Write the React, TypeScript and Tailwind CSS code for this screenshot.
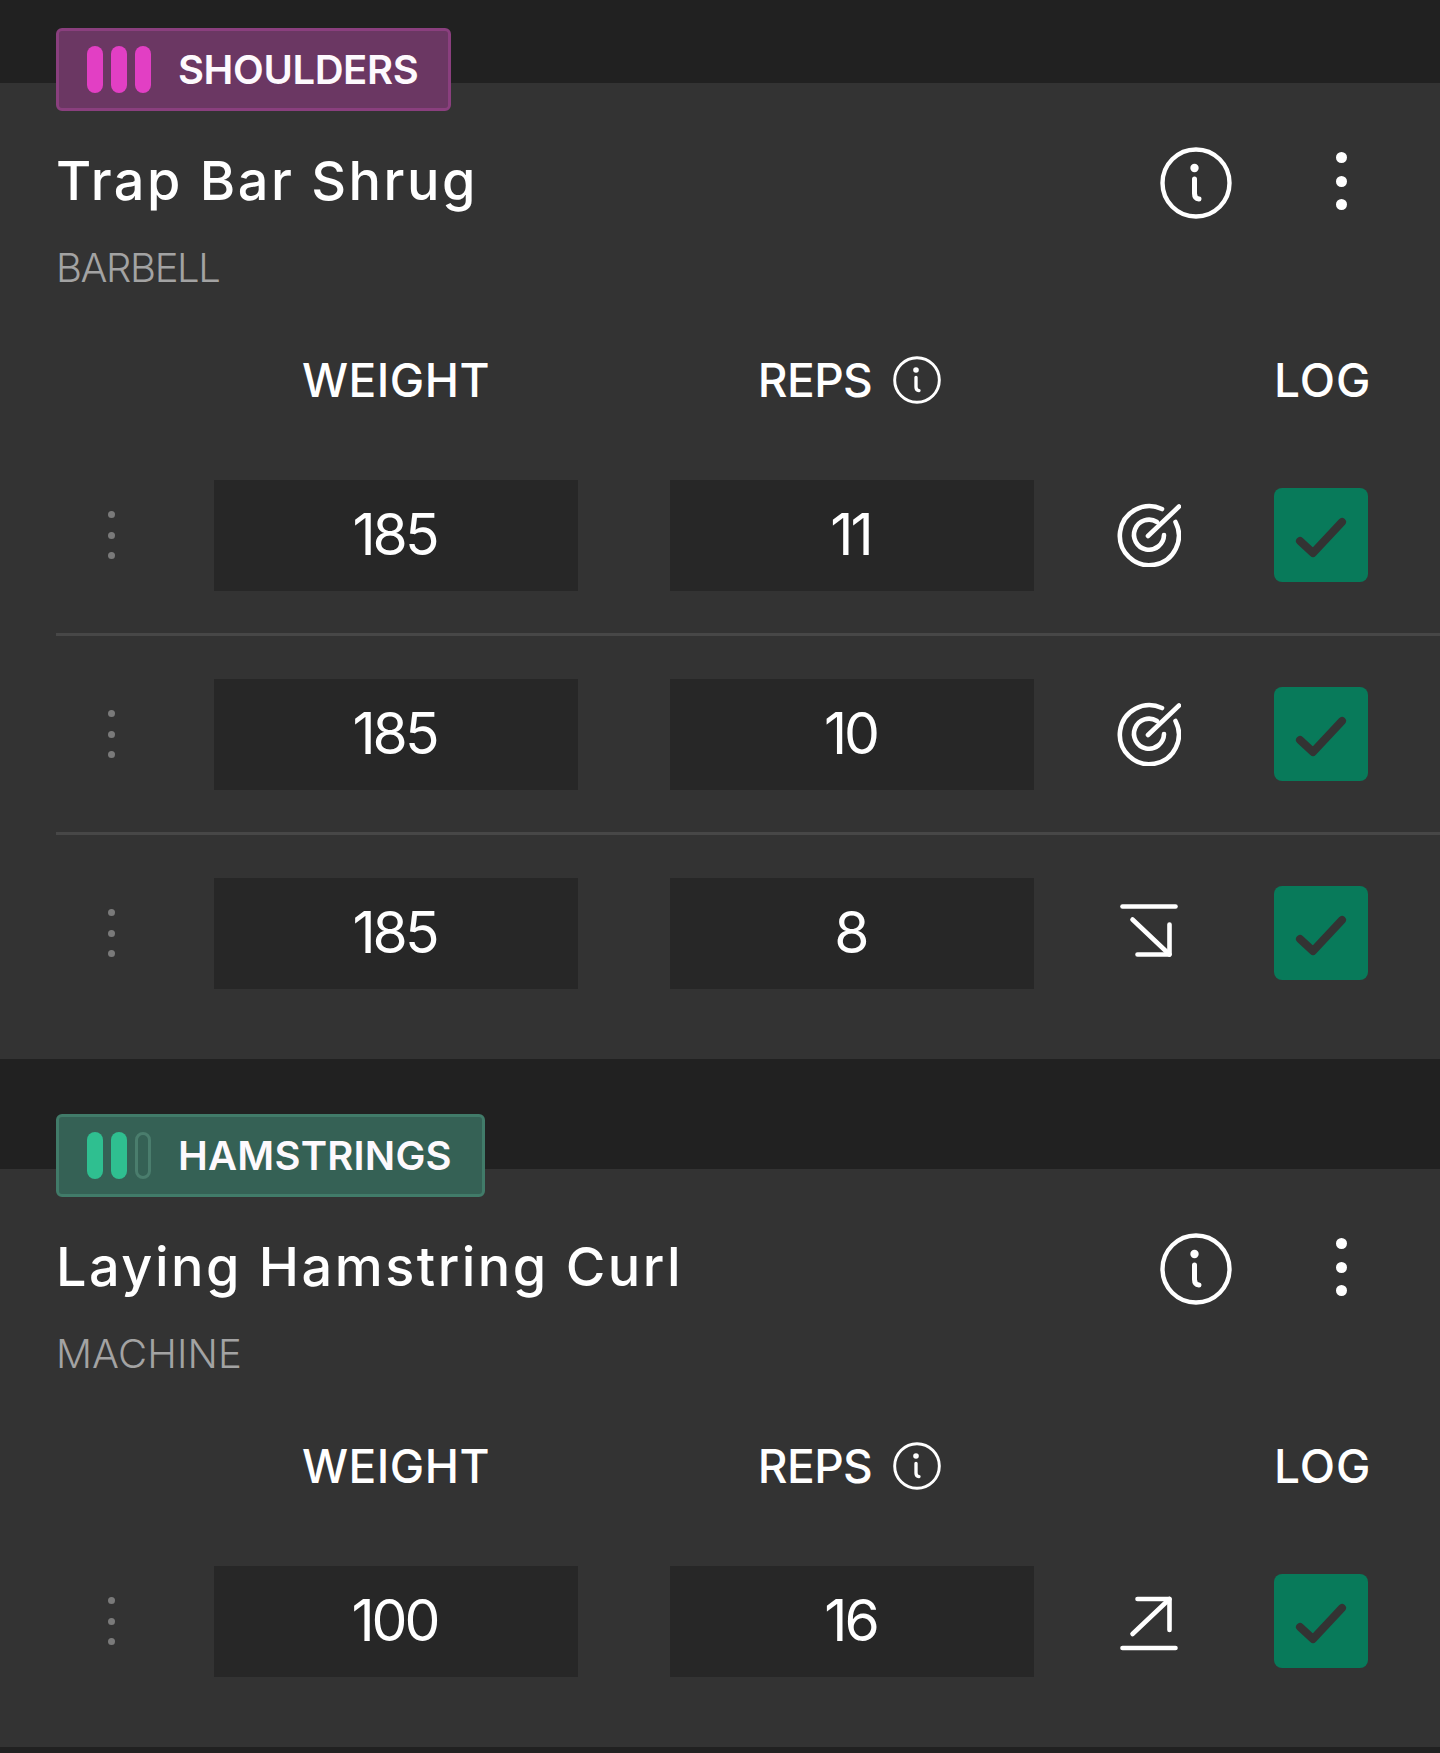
type Trend = 'target' | 'down' | 'up';

interface SetRow {
  weight: number;
  reps: number;
  trend: Trend;
}

interface Exercise {
  muscle: string;
  tone: 'pink' | 'green';
  fill: number;
  name: string;
  kit: string;
  sets: SetRow[];
}

const exercises: Exercise[] = [
  {
    muscle: 'SHOULDERS',
    tone: 'pink',
    fill: 3,
    name: 'Trap Bar Shrug',
    kit: 'BARBELL',
    sets: [
      { weight: 185, reps: 11, trend: 'target' },
      { weight: 185, reps: 10, trend: 'target' },
      { weight: 185, reps: 8, trend: 'down' },
    ],
  },
  {
    muscle: 'HAMSTRINGS',
    tone: 'green',
    fill: 2,
    name: 'Laying Hamstring Curl',
    kit: 'MACHINE',
    sets: [{ weight: 100, reps: 16, trend: 'up' }],
  },
];

const grid = 'grid grid-cols-[158px_364px_92px_364px_240px_94px] items-center';

function InfoIcon({ className }: { className: string }) {
  return (
    <svg viewBox="0 0 72 72" fill="none" stroke="currentColor" strokeWidth="4.4" strokeLinecap="round" className={className}>
      <circle cx="36" cy="36" r="33.5" />
      <circle cx="34.5" cy="21" r="4.2" fill="currentColor" stroke="none" />
      <path d="M34.5 32v14.5q0 5 4.5 5.5" strokeWidth="5" />
    </svg>
  );
}

function TrendIcon({ trend }: { trend: Trend }) {
  return (
    <svg viewBox="0 0 64 64" fill="none" stroke="currentColor" strokeWidth="4.6" strokeLinecap="round" strokeLinejoin="round" className="h-16 w-16 text-white">
      {trend === 'target' && (
        <>
          <path d="M45 6A29.5 29.5 0 1 0 58.5 19" />
          <path d="M40 19A15 15 0 1 0 47 32" />
          <path d="M31 33L62 3.5" />
        </>
      )}
      {trend === 'down' && (
        <>
          <path d="M5.5 5.5H58.5" />
          <path d="M15.5 18.5L52.5 53.5" />
          <path d="M52.5 23.5V53.5H20.5" />
        </>
      )}
      {trend === 'up' && (
        <>
          <path d="M5.5 59H58.5" />
          <path d="M15.5 45L52.5 10" />
          <path d="M20.5 10H52.5V41" />
        </>
      )}
    </svg>
  );
}

function Badge({ exercise }: { exercise: Exercise }) {
  const pink = exercise.tone === 'pink';
  return (
    <div
      className={`-mt-[55px] flex h-[83px] w-fit items-center rounded-[6px] border-[3px] pl-[28px] pr-[30px] ${
        pink ? 'border-[#8a3f7e] bg-[#6b3763]' : 'border-[#417b69] bg-[#356155]'
      }`}
    >
      <div className="flex gap-[8px]">
        {[0, 1, 2].map((i) => (
          <span
            key={i}
            className={`h-[47px] w-[16px] rounded-full ${
              i < exercise.fill
                ? pink
                  ? 'bg-[#e23fc4]'
                  : 'bg-[#2fbf90]'
                : 'border-[3px] border-[#4a7d6d]'
            }`}
          />
        ))}
      </div>
      <span
        className={`ml-[27px] text-[40px] leading-none font-semibold text-[#fdf9fd] ${
          pink ? 'tracking-[-0.4px]' : 'tracking-[0.2px]'
        }`}
      >
        {exercise.muscle}
      </span>
    </div>
  );
}

function ExerciseCard({ exercise }: { exercise: Exercise }) {
  return (
    <section className="flow-root bg-[#333333] pb-[28px] pl-[56px] [&+section]:mt-[110px]">
      <Badge exercise={exercise} />

      <div className="mt-[32px] flex h-[76px] items-center justify-between pr-[93px]">
        <h2 className="text-[54px] leading-[76px] font-medium tracking-[2.5px] text-white">{exercise.name}</h2>
        <div className="flex items-center gap-[104px]">
          <InfoIcon className="mt-[4px] h-[72px] w-[72px] text-white" />
          <div className="flex flex-col gap-[12.5px]">
            <span className="h-[11px] w-[11px] rounded-full bg-white" />
            <span className="h-[11px] w-[11px] rounded-full bg-white" />
            <span className="h-[11px] w-[11px] rounded-full bg-white" />
          </div>
        </div>
      </div>

      <p
        className={`mt-[25px] text-[40px] leading-[48px] font-light text-[#a3a3a3] ${
          exercise.tone === 'pink' ? 'tracking-[-1.4px]' : 'tracking-[0.1px]'
        }`}
      >
        {exercise.kit}
      </p>

      <div className={`${grid} mt-[60px] h-[56px] text-[46px] leading-none font-medium text-white`}>
        <span className="col-start-2 text-center tracking-[0.5px]">WEIGHT</span>
        <span className="col-start-4 flex items-center justify-center gap-[21px] pr-[5px] tracking-[-0.6px]">
          REPS
          <InfoIcon className="h-[48px] w-[48px]" />
        </span>
        <span className="col-start-6 pr-[2px] text-center tracking-[1px]">LOG</span>
      </div>

      <div className="mt-[29px]">
        {exercise.sets.map((set, i) => (
          <div key={i} className="border-b-[3px] border-[#474747] last:border-b-0">
            <div className={`${grid} h-[196px]`}>
              <div className="flex flex-col gap-[13.5px] pl-[52px]">
                <span className="h-[7px] w-[7px] rounded-full bg-[#7a7a7a]" />
                <span className="h-[7px] w-[7px] rounded-full bg-[#7a7a7a]" />
                <span className="h-[7px] w-[7px] rounded-full bg-[#7a7a7a]" />
              </div>
              <div className="flex h-[111px] items-center justify-center bg-[#272727] pr-[3px] text-[57px] tracking-[-3px] text-white">
                {set.weight}
              </div>
              <div className="col-start-4 flex h-[111px] items-center justify-center bg-[#272727] pr-[3px] text-[57px] tracking-[-3px] text-white">
                {set.reps}
              </div>
              <div className="flex justify-center pr-[11px]">
                <TrendIcon trend={set.trend} />
              </div>
              <div className="flex h-[94px] w-[94px] items-center justify-center rounded-[8px] bg-[#087a5a]">
                <svg viewBox="0 0 94 94" fill="none" stroke="#333333" strokeWidth="8" strokeLinecap="round" strokeLinejoin="round" className="h-[94px] w-[94px]">
                  <path d="M26 53L39 65L68 34" />
                </svg>
              </div>
            </div>
          </div>
        ))}
      </div>
    </section>
  );
}

export default function App() {
  return (
    <div className="min-h-[1753px] bg-[#212121] pt-[83px] font-['Inter','Liberation_Sans',sans-serif]">
      {exercises.map((exercise) => (
        <ExerciseCard key={exercise.name} exercise={exercise} />
      ))}
    </div>
  );
}
